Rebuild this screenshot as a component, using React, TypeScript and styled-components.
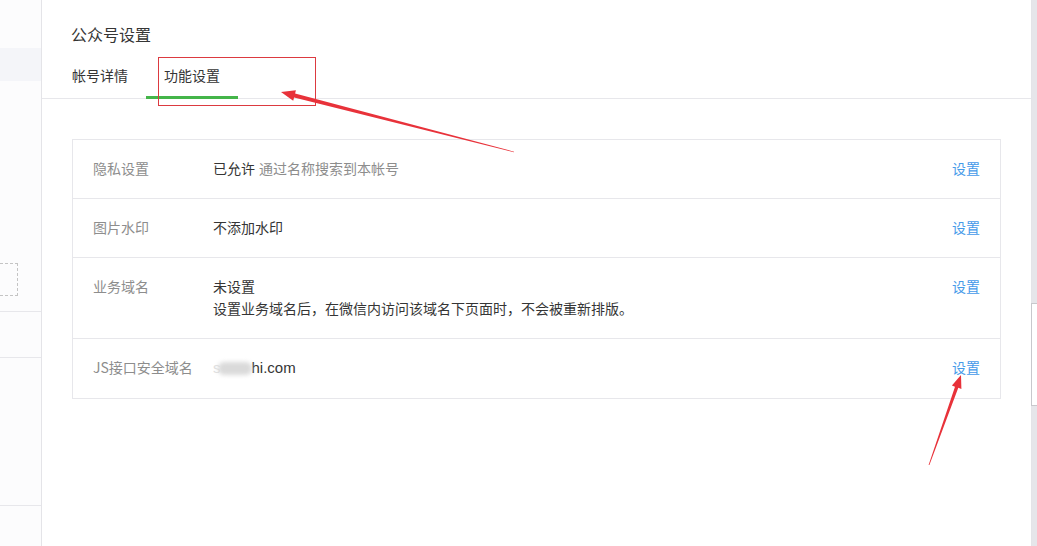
import React from "react";
import styled, { createGlobalStyle } from "styled-components";

const Global = createGlobalStyle`
  html, body { margin: 0; padding: 0; background: #fff; }
  body {
    font-family: "Noto Sans CJK SC", "Microsoft YaHei", "Liberation Sans", sans-serif;
    font-size: 14px;
    color: #353535;
  }
  * { box-sizing: border-box; }
`;

const Page = styled.div`
  position: relative;
  display: flex;
  width: 1037px;
  height: 546px;
  overflow: hidden;
  background: #fff;
`;

const Sidebar = styled.aside`
  width: 42px;
  flex: none;
  display: flex;
  flex-direction: column;
  background: #fcfcfd;
  border-right: 1px solid #e4e4e8;
`;

const SideBlock = styled.div<{ $h: number; $line?: boolean }>`
  height: ${(p) => p.$h}px;
  flex: none;
  border-bottom: ${(p) => (p.$line ? "1px solid #e7e7eb" : "none")};
`;

const SideActive = styled.div`
  height: 33px;
  flex: none;
  background: #f4f5f9;
`;

const DashedBox = styled.div`
  width: 18px;
  height: 33px;
  flex: none;
  border: 1px dashed #c4c4c4;
  border-left: none;
`;

const Main = styled.main`
  flex: 1;
  display: flex;
  flex-direction: column;
  border-right: 1px solid #e4e4e8;
`;

const Header = styled.header`
  padding: 22px 0 0 0;
  border-bottom: 1px solid #e7e7eb;
`;

const Title = styled.h2`
  margin: 0 0 8px 29px;
  font-size: 16px;
  font-weight: normal;
  line-height: 24px;
  color: #353535;
`;

const Tabs = styled.nav`
  display: flex;
  margin-left: 12px;
  height: 44px;
`;

const Tab = styled.div<{ $active?: boolean }>`
  height: 45px;
  padding: 0 18px;
  line-height: 42px;
  font-size: 14px;
  color: #353535;
  margin-bottom: -1px;
  border-bottom: 3px solid ${(p) => (p.$active ? "#44b549" : "transparent")};
`;

const Body = styled.section`
  padding: 40px 30px 0 30px;
`;

const Table = styled.div`
  border: 1px solid #e7e7eb;
`;

const Row = styled.div`
  display: flex;
  align-items: flex-start;
  padding: 17px 20px 19px 20px;
  line-height: 22px;
  & + & {
    border-top: 1px solid #e7e7eb;
  }
`;

const Label = styled.div`
  width: 120px;
  flex: none;
  color: #8d8d8d;
`;

const Value = styled.div`
  flex: 1;
  color: #353535;
`;

const Hint = styled.span`
  color: #8d8d8d;
  margin-left: 4px;
`;

const Action = styled.a`
  flex: none;
  color: #459ae9;
  text-decoration: none;
  cursor: pointer;
`;

const Domain = styled.span`
  display: inline-flex;
  align-items: center;
  font-family: "Liberation Sans", Arial, sans-serif;
  font-size: 15px;
`;

const Faint = styled.span`
  color: #e0e0e0;
`;

const Blur = styled.span`
  display: inline-block;
  width: 34px;
  height: 13px;
  margin: 0 0 0 -3px;
  background: #dadada;
  border-radius: 6px;
  filter: blur(2px);
`;

const Track = styled.div`
  width: 5px;
  flex: none;
  background: #e6e6ea;
  padding-top: 303px;
`;

const Thumb = styled.div`
  height: 103px;
  background: #fff;
  border: 1px solid #c8c8cc;
  border-right: none;
  margin-left: -1px;
`;

const Highlight = styled.div`
  position: absolute;
  left: 158px;
  top: 57px;
  width: 158px;
  height: 49px;
  border: 1px solid #dc3a40;
  pointer-events: none;
`;

const Overlay = styled.svg`
  position: absolute;
  left: 0;
  top: 0;
  pointer-events: none;
`;

type P = [number, number];

function arrowPoints(tail: P, tip: P, wt: number, wb: number, hl: number, hw: number): string {
  const dx = tip[0] - tail[0];
  const dy = tip[1] - tail[1];
  const len = Math.hypot(dx, dy);
  const ux = dx / len;
  const uy = dy / len;
  const nx = -uy;
  const ny = ux;
  const bx = tip[0] - ux * hl;
  const by = tip[1] - uy * hl;
  const pts: P[] = [
    [tail[0] + (nx * wt) / 2, tail[1] + (ny * wt) / 2],
    [bx + (nx * wb) / 2, by + (ny * wb) / 2],
    [bx + (nx * hw) / 2, by + (ny * hw) / 2],
    tip,
    [bx - (nx * hw) / 2, by - (ny * hw) / 2],
    [bx - (nx * wb) / 2, by - (ny * wb) / 2],
    [tail[0] - (nx * wt) / 2, tail[1] - (ny * wt) / 2],
  ];
  return pts.map((p) => `${p[0].toFixed(1)},${p[1].toFixed(1)}`).join(" ");
}

const rows = [
  { label: "隐私设置", value: <>已允许<Hint>通过名称搜索到本帐号</Hint></> },
  { label: "图片水印", value: <>不添加水印</> },
  {
    label: "业务域名",
    value: (
      <>
        未设置
        <br />
        设置业务域名后，在微信内访问该域名下页面时，不会被重新排版。
      </>
    ),
  },
  {
    label: "JS接口安全域名",
    value: (
      <Domain>
        <Faint>s</Faint>
        <Blur />
        hi.com
      </Domain>
    ),
  },
];

export default function App() {
  return (
    <>
      <Global />
      <Page>
        <Sidebar>
          <SideBlock $h={48} />
          <SideActive />
          <SideBlock $h={182} />
          <DashedBox />
          <SideBlock $h={16} $line />
          <SideBlock $h={46} $line />
          <SideBlock $h={148} $line />
        </Sidebar>
        <Main>
          <Header>
            <Title>公众号设置</Title>
            <Tabs>
              <Tab>帐号详情</Tab>
              <Tab $active>功能设置</Tab>
            </Tabs>
          </Header>
          <Body>
            <Table>
              {rows.map((r) => (
                <Row key={r.label}>
                  <Label>{r.label}</Label>
                  <Value>{r.value}</Value>
                  <Action>设置</Action>
                </Row>
              ))}
            </Table>
          </Body>
        </Main>
        <Track>
          <Thumb />
        </Track>
        <Highlight />
        <Overlay width={1037} height={546} viewBox="0 0 1037 546">
          <polygon points={arrowPoints([514, 152], [281, 92], 0.6, 4, 14, 11)} fill="#e8323a" />
          <polygon points={arrowPoints([929, 465], [961, 375], 0.8, 3.5, 13, 10)} fill="#e8323a" />
        </Overlay>
      </Page>
    </>
  );
}
